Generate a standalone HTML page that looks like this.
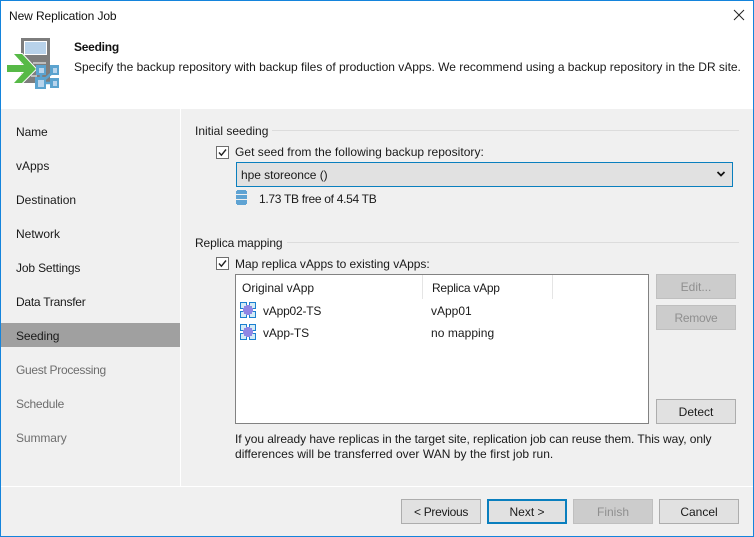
<!DOCTYPE html>
<html>
<head>
<meta charset="utf-8">
<style>
html,body{margin:0;padding:0;}
body{width:754px;height:537px;overflow:hidden;background:#f0f0f0;position:relative;font-family:"Liberation Sans",sans-serif;font-size:12px;color:#1a1a1a;}
.a{position:absolute;}
.t{position:absolute;white-space:nowrap;line-height:16px;height:16px;}
.n{left:16px;}
.d{color:#6d6d6d;}
.btn{position:absolute;box-sizing:border-box;height:25px;width:80px;border:1px solid #adadad;background:#e1e1e1;text-align:center;line-height:25px;color:#1a1a1a;}
.btn.dis{background:#cccccc;border-color:#bfbfbf;color:#8f8f8f;}
.cb{position:absolute;box-sizing:border-box;width:13px;height:13px;border:1px solid #6e6e6e;background:#fff;}
.line{position:absolute;height:1px;background:#dcdcdc;}
</style>
</head>
<body>
<div class="a" style="left:0;top:0;width:754px;height:109px;background:#fff;"></div>
<div class="t" style="left:9px;top:8px;color:#111;letter-spacing:-0.1px;">New Replication Job</div>
<svg class="a" style="left:733px;top:9px;" width="12" height="12" viewBox="0 0 12 12"><path d="M1 1L11 11M11 1L1 11" stroke="#222" stroke-width="1" fill="none"/></svg>

<svg class="a" style="left:7px;top:38px;" width="54" height="52" viewBox="0 0 54 52">
<g shape-rendering="crispEdges">
<rect x="14" y="0" width="29" height="45" fill="#7d7d7d"/>
<rect x="17" y="3" width="23" height="14" fill="#fff"/>
<rect x="18" y="4" width="21" height="12" fill="#b8d2ea"/>
<rect x="26" y="24" width="13" height="2" fill="#bdbdbd"/>
<rect x="24" y="37" width="6" height="2" fill="#bdbdbd"/>
</g>
<path d="M7 16H15L29 31L15 45H7L17 34H0V27H17Z" fill="#57b947" stroke="#fff" stroke-width="2"/>
<path d="M7 16H15L29 31L15 45H7L17 34H0V27H17Z" fill="#57b947"/>
<path d="M38 41L45 35M39 45H44M34 37V40" stroke="#5ba3cf" stroke-width="2.5" fill="none"/>
<g shape-rendering="crispEdges">
<rect x="29" y="27" width="10" height="10" fill="#5ba3cf"/><rect x="32" y="30" width="5" height="5" fill="#b8d4ec"/>
<rect x="43" y="27" width="9" height="10" fill="#5ba3cf"/><rect x="46" y="30" width="4" height="5" fill="#b8d4ec"/>
<rect x="28" y="39" width="11" height="12" fill="#5ba3cf"/><rect x="31" y="42" width="6" height="7" fill="#b8d4ec"/>
<rect x="43" y="40" width="9" height="10" fill="#5ba3cf"/><rect x="46" y="43" width="4" height="5" fill="#b8d4ec"/>
</g>
</svg>

<div class="t" style="left:74px;top:39px;font-weight:bold;color:#111;letter-spacing:-0.25px;">Seeding</div>
<div class="t" id="sub" style="left:74px;top:59px;letter-spacing:-0.01px;">Specify the backup repository with backup files of production vApps. We recommend using a backup repository in the DR site.</div>

<!-- sidebar -->
<div class="a" style="left:1px;top:323px;width:179px;height:24px;background:#a0a0a0;"></div>
<div class="a" style="left:180px;top:109px;width:1px;height:377px;background:#fff;"></div>
<div class="a" style="left:0;top:486px;width:754px;height:1px;background:#fff;"></div>
<div class="t n" style="top:124px;letter-spacing:-0.1px;">Name</div>
<div class="t n" style="top:158px;">vApps</div>
<div class="t n" style="top:192px;">Destination</div>
<div class="t n" style="top:226px;">Network</div>
<div class="t n" style="top:260px;letter-spacing:-0.15px;">Job Settings</div>
<div class="t n" style="top:294px;letter-spacing:-0.25px;">Data Transfer</div>
<div class="t n" style="top:328px;letter-spacing:-0.1px;">Seeding</div>
<div class="t n d" style="top:362px;letter-spacing:-0.3px;">Guest Processing</div>
<div class="t n d" style="top:396px;letter-spacing:-0.25px;">Schedule</div>
<div class="t n d" style="top:430px;letter-spacing:-0.1px;">Summary</div>

<!-- initial seeding -->
<div class="t" style="left:195px;top:123px;">Initial seeding</div>
<div class="line" style="left:272px;top:130px;width:467px;"></div>
<div class="cb" style="left:216px;top:146px;"></div>
<svg class="a" style="left:216px;top:146px;" width="13" height="13" viewBox="0 0 13 13"><path d="M3 6.5L5.4 9.2L10 3.5" stroke="#222" stroke-width="1.4" fill="none"/></svg>
<div class="t" style="left:235px;top:144px;letter-spacing:0.03px;">Get seed from the following backup repository:</div>
<div class="a" style="left:236px;top:162px;width:497px;height:25px;box-sizing:border-box;border:1px solid #0a7fbe;background:#e1e1e1;"></div>
<div class="t" style="left:241px;top:167px;letter-spacing:-0.05px;">hpe storeonce ()</div>
<svg class="a" style="left:716px;top:170px;" width="10" height="8" viewBox="0 0 10 8"><path d="M1.5 2L5 5.5L8.5 2" stroke="#111" stroke-width="1.7" fill="none"/></svg>
<svg class="a" style="left:236px;top:190px;" width="11" height="16" viewBox="0 0 11 16" shape-rendering="crispEdges">
<rect x="0" y="1" width="11" height="3" fill="#5fa3d3"/><rect x="1" y="0" width="9" height="1" fill="#5fa3d3"/>
<rect x="0" y="5" width="11" height="4" fill="#5fa3d3"/>
<rect x="0" y="10" width="11" height="4" fill="#5fa3d3"/><rect x="1" y="14" width="9" height="1" fill="#5fa3d3"/>
</svg>
<div class="t" style="left:259px;top:191px;letter-spacing:-0.3px;">1.73 TB free of 4.54 TB</div>

<!-- replica mapping -->
<div class="t" style="left:195px;top:235px;letter-spacing:-0.13px;">Replica mapping</div>
<div class="line" style="left:287px;top:242px;width:452px;"></div>
<div class="cb" style="left:216px;top:257px;"></div>
<svg class="a" style="left:216px;top:257px;" width="13" height="13" viewBox="0 0 13 13"><path d="M3 6.5L5.4 9.2L10 3.5" stroke="#222" stroke-width="1.4" fill="none"/></svg>
<div class="t" style="left:235px;top:256px;letter-spacing:-0.04px;">Map replica vApps to existing vApps:</div>

<div class="a" style="left:235px;top:274px;width:414px;height:150px;box-sizing:border-box;border:1px solid #828282;background:#fff;"></div>
<div class="a" style="left:422px;top:275px;width:1px;height:24px;background:#e5e5e5;"></div>
<div class="a" style="left:552px;top:275px;width:1px;height:24px;background:#e5e5e5;"></div>
<div class="t" style="left:242px;top:280px;">Original vApp</div>
<div class="t" style="left:432px;top:280px;letter-spacing:-0.25px;">Replica vApp</div>

<svg class="a" style="left:240px;top:302px;" width="16" height="16" viewBox="0 0 16 16" shape-rendering="crispEdges">
<g fill="#d3ebf6" stroke="#1b80d0" stroke-width="1"><rect x="0.5" y="0.5" width="6" height="6"/><rect x="9.5" y="0.5" width="6" height="6"/><rect x="0.5" y="9.5" width="6" height="6"/><rect x="9.5" y="9.5" width="6" height="6"/></g>
<rect x="4" y="4" width="8" height="8" fill="#8f86e4"/><rect x="6" y="3" width="4" height="10" fill="#8f86e4"/><rect x="3" y="6" width="10" height="4" fill="#8f86e4"/>
</svg>
<svg class="a" style="left:240px;top:324px;" width="16" height="16" viewBox="0 0 16 16" shape-rendering="crispEdges">
<g fill="#d3ebf6" stroke="#1b80d0" stroke-width="1"><rect x="0.5" y="0.5" width="6" height="6"/><rect x="9.5" y="0.5" width="6" height="6"/><rect x="0.5" y="9.5" width="6" height="6"/><rect x="9.5" y="9.5" width="6" height="6"/></g>
<rect x="4" y="4" width="8" height="8" fill="#8f86e4"/><rect x="6" y="3" width="4" height="10" fill="#8f86e4"/><rect x="3" y="6" width="10" height="4" fill="#8f86e4"/>
</svg>
<div class="t" style="left:263px;top:303px;letter-spacing:-0.2px;">vApp02-TS</div>
<div class="t" style="left:431px;top:303px;">vApp01</div>
<div class="t" style="left:263px;top:325px;letter-spacing:-0.1px;">vApp-TS</div>
<div class="t" style="left:431px;top:325px;letter-spacing:0.05px;">no mapping</div>

<div class="btn dis" style="left:656px;top:274px;">Edit...</div>
<div class="btn dis" style="left:656px;top:305px;letter-spacing:-0.3px;">Remove</div>
<div class="btn" style="left:656px;top:399px;">Detect</div>

<div class="t" id="n1" style="left:235px;top:431px;letter-spacing:-0.07px;">If you already have replicas in the target site, replication job can reuse them. This way, only</div>
<div class="t" id="n2" style="left:235px;top:446px;letter-spacing:0.035px;">differences will be transferred over WAN by the first job run.</div>

<!-- footer -->
<div class="btn" style="left:401px;top:499px;letter-spacing:-0.3px;">&lt; Previous</div>
<div class="btn" style="left:487px;top:499px;border:2px solid #0a7fbe;line-height:23px;">Next &gt;</div>
<div class="btn dis" style="left:573px;top:499px;">Finish</div>
<div class="btn" style="left:659px;top:499px;">Cancel</div>

<!-- window border -->
<div class="a" style="left:0;top:0;width:754px;height:1px;background:#1484dc;"></div>
<div class="a" style="left:0;top:0;width:1px;height:537px;background:#1484dc;"></div>
<div class="a" style="left:753px;top:0;width:1px;height:537px;background:#1484dc;"></div>
<div class="a" style="left:0;top:536px;width:754px;height:1px;background:#1484dc;"></div>
</body>
</html>
